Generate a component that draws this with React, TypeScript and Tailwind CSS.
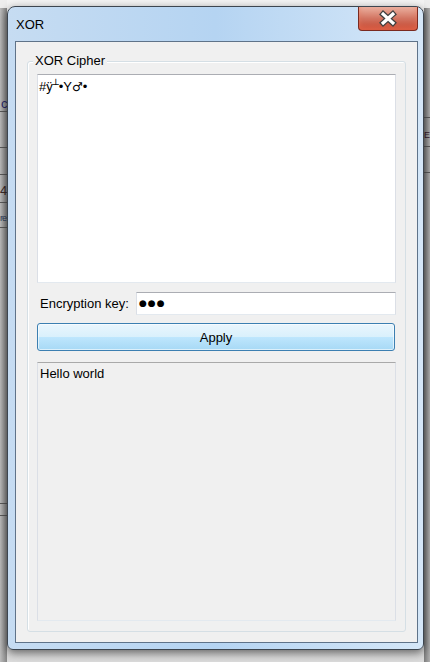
import React from 'react'

type Seg = { h: number; text?: string; line?: boolean; light?: boolean; cls?: string }

const LEFT: Seg[] = [
  { h: 8, light: true },
  { h: 104, text: 'c', cls: 'pl-[1px] pt-[88px] text-[#2a2a6a]', line: true },
  { h: 36, line: true },
  { h: 27, line: true },
  { h: 28, text: '4', cls: 'pt-[8px] text-[#3a2a2a]', line: true },
  { h: 25, text: 're', cls: 'pt-[8px] text-[9px] tracking-[-1px] text-[#2a3a5a]', line: true },
  { h: 276, line: true },
  { h: 12, line: true },
  { h: 146 },
]

const RIGHT: Seg[] = [
  { h: 8, light: true },
  { h: 110, line: true },
  { h: 29, text: 'E', cls: 'pt-[10px] text-[9px] text-[#3a1a2a]', line: true },
  { h: 26, line: true },
  { h: 489 },
]

function Strip({ segs, side }: { segs: Seg[]; side: 'l' | 'r' }) {
  return (
    <div className={side === 'l' ? 'w-[7px] flex flex-col overflow-hidden' : 'w-[6px] flex flex-col overflow-hidden'}>
      {segs.map((s, i) => (
        <div
          key={i}
          style={{ height: s.h }}
          className={
            (s.light
              ? 'bg-[#eeeeee] '
              : side === 'l'
                ? 'bg-gradient-to-r from-[#bdbdbd] to-[#858585] '
                : 'bg-gradient-to-r from-[#7c7c7c] to-[#b0b0b0] ') +
            (s.line ? 'border-b border-[#5a5a5a] ' : '') +
            'shrink-0 overflow-hidden text-[13px] leading-[15px] whitespace-nowrap'
          }
        >
          {s.text && <div className={s.cls}>{s.text}</div>}
        </div>
      ))}
    </div>
  )
}

function CloseButton() {
  return (
    <div className="w-[60px] h-[24px] rounded-b-[4px] border border-t-0 border-[#7a2a20] bg-gradient-to-b from-[#eab0a0] via-[#d27461] to-[#c2402b] flex items-center justify-center shadow-[inset_0_-3px_5px_rgba(240,120,90,0.6)]">
      <svg width="60" height="22" viewBox="0 0 60 22">
        <path d="M25 6 L35 15 M35 6 L25 15" stroke="#3f3f3f" strokeWidth="6" strokeLinecap="square" fill="none" />
        <path d="M25 6 L35 15 M35 6 L25 15" stroke="#ffffff" strokeWidth="3.4" strokeLinecap="square" fill="none" />
      </svg>
    </div>
  )
}

function Window() {
  return (
    <div className="relative z-10 w-[417px] h-[644px] rounded-t-[8px] rounded-b-[6px] border border-[#3d4650] bg-gradient-to-r from-[#c6dcf2] via-[#b5d4f2] to-[#d5e7f8] shadow-[0_3px_10px_rgba(0,0,0,0.55)] pl-[7px] pr-[5px] pb-[6px] flex flex-col">
      <div className="h-[34px] flex justify-between items-start">
        <span className="ml-[1px] mt-[10px] text-[13px] leading-[15px] text-black">XOR</span>
        <CloseButton />
      </div>
      <div className="flex-1 border border-[#5f7389] bg-[#f0f0f0] flex flex-col">
        <div className="relative mx-[11px] mt-[19px] mb-[10px] flex-1 rounded-[3px] border border-[#d5dfe5] shadow-[inset_1px_1px_0_#ffffff] px-[9px] pt-[12px] pb-[10px] flex flex-col">
          <span className="absolute left-[5px] -top-[9px] bg-[#f0f0f0] px-[2px] text-[13px] leading-[15px]">XOR Cipher</span>
          <div className="h-[209px] border border-[#abadb3] border-b-[#e3e9ef] border-x-[#dbdfe6] bg-white pl-[1px] pt-[2px] leading-[15px] text-[13px]">
            #ÿ<span className="align-[3px] text-[10px] font-['DejaVu_Sans',sans-serif]">┴</span>•Y<span className="text-[12px] font-['DejaVu_Sans',sans-serif] text-black">♂︎</span>•
          </div>
          <div className="mt-[9px] h-[23px] flex items-center">
            <span className="w-[99px] pl-[3px] leading-[15px]">Encryption key:</span>
            <div className="flex-1 h-full border border-[#abadb3] border-b-[#e3e9ef] border-x-[#dbdfe6] bg-white pl-[2px] flex items-center font-['DejaVu_Sans',sans-serif] text-[9px] tracking-[1px]">
              ●●●
            </div>
          </div>
          <button className="mt-[8px] mr-[1px] h-[28px] rounded-[3px] border border-[#3c7fb1] bg-[linear-gradient(to_bottom,#eaf6fd_0%,#d9f0fc_50%,#bee6fd_51%,#a7d9f5_100%)] shadow-[inset_0_0_0_1px_rgba(255,255,255,0.6)] text-[13px] leading-[15px] text-black">
            Apply
          </button>
          <div className="mt-[11px] flex-1 border border-[#a9a9a9] border-b-[#e3e9ef] border-x-[#dbdfe6] bg-[#f0f0f0] pl-[2px] pt-[3px] leading-[15px]">
            Hello world
          </div>
        </div>
      </div>
    </div>
  )
}

export default function App() {
  return (
    <div className="w-[430px] h-[662px] overflow-hidden flex bg-[#e4e4e4] font-['Liberation_Sans',Arial,sans-serif] text-[13px] text-black">
      <Strip segs={LEFT} side="l" />
      <div className="w-[417px] pt-[6px] flex flex-col bg-gradient-to-b from-[#f4f4f4] to-[#dcdcdc]">
        <Window />
      </div>
      <Strip segs={RIGHT} side="r" />
    </div>
  )
}
